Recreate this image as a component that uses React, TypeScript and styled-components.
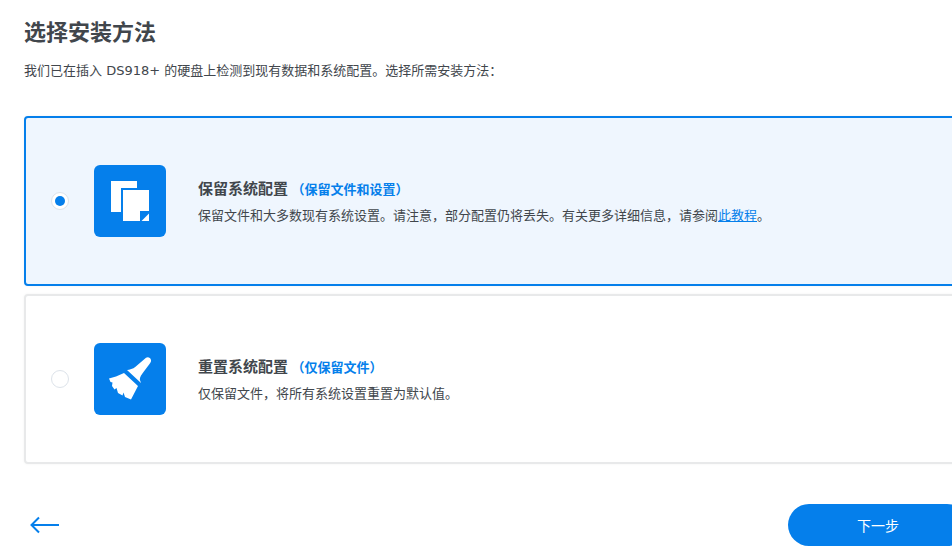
import React from 'react';
import styled, {createGlobalStyle} from 'styled-components';

const GlobalStyle = createGlobalStyle`
  html, body {
    margin: 0;
    padding: 0;
    width: 952px;
    height: 546px;
    overflow: hidden;
    background: #fff;
  }
  body {
    font-family: "Noto Sans CJK SC", "Liberation Sans", sans-serif;
  }
`;

const Page = styled.div`
  width: 944px;
  height: 546px;
  padding-left: 24px;
  display: flex;
  flex-direction: column;
`;

const Title = styled.h1`
  margin: 13px 0 0;
  font-size: 22px;
  line-height: 34px;
  font-weight: 700;
  color: #41464c;
`;

const Intro = styled.p`
  margin: 14px 0 0;
  font-family: "DejaVu Sans", "Noto Sans CJK SC", sans-serif;
  font-size: 13px;
  line-height: 20px;
  color: #41464c;
`;

const Options = styled.div`
  margin-top: 35px;
  display: flex;
  flex-direction: column;
  gap: 8px;
`;

const Card = styled.div<{ $selected?: boolean }>`
  height: 170px;
  box-sizing: border-box;
  padding-left: 25px;
  display: flex;
  align-items: center;
  border: 2px solid ${p => (p.$selected ? '#057feb' : '#e8e9ea')};
  border-radius: 4px;
  background: ${p => (p.$selected ? '#eff6fe' : '#fff')};
  box-shadow: 0 0 3px rgba(0, 0, 0, 0.05);
`;

const Radio = styled.span<{ $selected?: boolean }>`
  width: 18px;
  height: 18px;
  box-sizing: border-box;
  flex: none;
  display: flex;
  align-items: center;
  justify-content: center;
  border: 1px solid #dde3ea;
  border-radius: 50%;
  background: #fff;

  &::after {
    content: '';
    display: ${p => (p.$selected ? 'block' : 'none')};
    width: 10px;
    height: 10px;
    border-radius: 50%;
    background: #057feb;
  }
`;

const IconTile = styled.div`
  width: 72px;
  height: 72px;
  margin-left: 25px;
  flex: none;
  border-radius: 6px;
  background: #057feb;

  svg {
    display: block;
  }
`;

const Texts = styled.div`
  margin-left: 32px;
`;

const OptionTitle = styled.div`
  font-size: 15px;
  line-height: 22px;
  font-weight: 700;
  color: #41464c;
`;

const Hint = styled.span`
  font-size: 13px;
  color: #057feb;
`;

const OptionText = styled.div`
  margin-top: 5px;
  font-size: 13px;
  line-height: 20px;
  color: #41464c;
`;

const DocLink = styled.a`
  color: #057feb;
  text-decoration: underline;
`;

const Footer = styled.div`
  margin-top: 40px;
  display: flex;
  align-items: center;
  justify-content: space-between;
`;

const BackButton = styled.button`
  width: 30px;
  height: 42px;
  margin-left: 6px;
  padding: 0;
  border: 0;
  background: none;

  svg {
    display: block;
  }
`;

const NextButton = styled.button`
  width: 180px;
  height: 42px;
  border: 0;
  border-radius: 21px;
  background: #057feb;
  color: #fff;
  font-family: inherit;
  font-size: 14px;
`;

function CopyIcon() {
  return (
    <svg width="72" height="72" viewBox="0 0 72 72">
      <path fill="#fff" d="M17 16h26v7H27v24H17z"/>
      <path fill="#fff" d="M29 25h26v21h-9v10H29z"/>
      <path fill="#fff" d="M47.500 56L55 48.500V56z"/>
    </svg>
  );
}

function BroomIcon() {
  return (
    <svg width="72" height="72" viewBox="0 0 72 72">
      <path fill="#fff" d="M52 14.800C54 13.600 56.500 14.600 57 17C57.300 18.500 56.500 19.800 55.500 21L49.500 29C47.500 31.500 45.800 34 45.800 36.500L47 40 33 27C35.500 26.800 39 26 41.500 23.800z"/>
      <path fill="#fff" d="M30 30L44 43 37 56.500 31 54 29.500 49.500 28.500 52.500 24 50 22.500 45 20.500 46.500 18 43 18.500 39.500 16.500 39 15 35.500 22 33.500z"/>
    </svg>
  );
}

function BackArrow() {
  return (
    <svg width="30" height="42" viewBox="0 0 30 42" fill="none" stroke="#057feb" strokeWidth="2">
      <path d="M29 21H2M9 13.500L1.500 21 9 28.500"/>
    </svg>
  );
}

export default function App() {
  return (
    <Page>
      <GlobalStyle/>
      <Title>选择安装方法</Title>
      <Intro>我们已在插入 DS918+ 的硬盘上检测到现有数据和系统配置。选择所需安装方法：</Intro>
      <Options>
        <Card $selected>
          <Radio $selected/>
          <IconTile><CopyIcon/></IconTile>
          <Texts>
            <OptionTitle>保留系统配置 <Hint>（保留文件和设置）</Hint></OptionTitle>
            <OptionText>
              保留文件和大多数现有系统设置。请注意，部分配置仍将丢失。有关更多详细信息，请参阅<DocLink href="#">此教程</DocLink>。
            </OptionText>
          </Texts>
        </Card>
        <Card>
          <Radio/>
          <IconTile><BroomIcon/></IconTile>
          <Texts>
            <OptionTitle>重置系统配置 <Hint>（仅保留文件）</Hint></OptionTitle>
            <OptionText>仅保留文件，将所有系统设置重置为默认值。</OptionText>
          </Texts>
        </Card>
      </Options>
      <Footer>
        <BackButton aria-label="back"><BackArrow/></BackButton>
        <NextButton>下一步</NextButton>
      </Footer>
    </Page>
  );
}
